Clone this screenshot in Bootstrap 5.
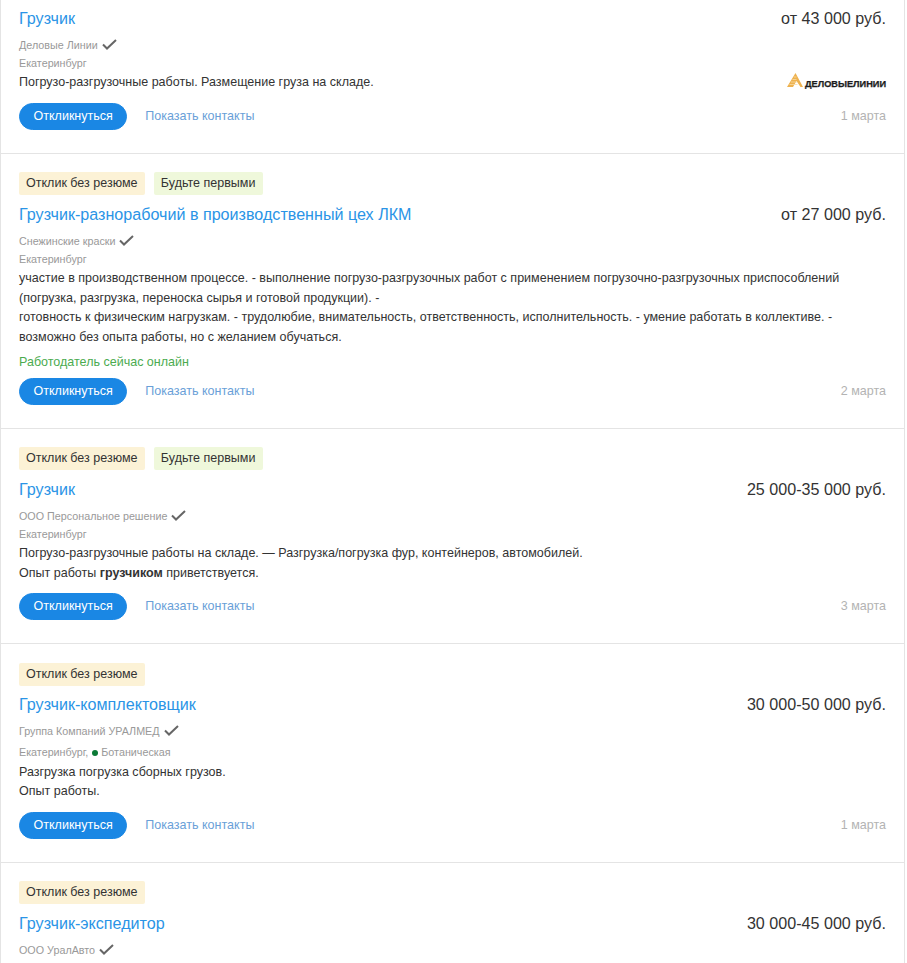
<!DOCTYPE html>
<html lang="ru"><head><meta charset="utf-8">
<link href="https://cdn.jsdelivr.net/npm/bootstrap@5.3.0/dist/css/bootstrap.min.css" rel="stylesheet">
<style>
html,body{background:#fff;overflow:hidden;height:963px}
body{font-family:"Liberation Sans",Arial,sans-serif;font-size:12.53px;line-height:19.5px;color:#333}
.vlist{width:905px;height:964px;overflow:hidden;border-left:1px solid #e4e4e4;border-right:1px solid #e4e4e4;margin-top:-1px}
.vitem{padding:0 18px;border-bottom:1px solid #e4e4e4}
.vlast{border-bottom:0}
.vtags{display:flex;gap:9px;padding-top:18.5px;margin-bottom:7.5px}
.vtag{height:23px;line-height:23px;padding:0 7.4px 0 7px;border-radius:2px;color:#333}
.vtag-y{background:#fcf2d6}
.vtag-g{background:#eff8db}
.vtitle{font-size:16.12px;line-height:22px;color:#2a94e6;text-decoration:none}
.vsalary{font-size:16.12px;line-height:22px;color:#333}
.vfirst{padding-top:7.5px}
.vco{font-size:10.75px;line-height:16px;color:#999;margin-top:8px;height:18px}
.vco svg{margin-left:1px;vertical-align:-1px}
.vcity{font-size:10.75px;line-height:17px;color:#999}
.vcity-metro{margin-top:3px}
.vdesc{margin-top:1.5px}
.vonline{color:#4bab4f;margin-top:6px}
.vbtn{--bs-btn-bg:#1a87e4;--bs-btn-border-color:#1a87e4;--bs-btn-color:#fff;--bs-btn-hover-bg:#1a87e4;--bs-btn-font-size:12.53px;--bs-btn-line-height:17px;padding:4px 13.5px;border-width:1px;height:27px;border-radius:14px;white-space:nowrap}
.vshow{color:#6a9fd8;text-decoration:none;margin-left:18px;line-height:27px}
.vdate{color:#b3b3b3;margin-left:auto;line-height:27px}
.vact{margin-top:10px;padding-bottom:23px}
.vact2{margin-top:5px}
.vmetro{display:inline-block;width:6px;height:6px;border-radius:50%;background:#0b7a36;margin:0 3px 0 1px}
.vlogo{flex:none;margin-top:-4px;margin-right:-1px}
</style></head><body>
<div class="vlist">

<div class="vitem vfirst">
 <div class="d-flex justify-content-between align-items-center"><a class="vtitle" href="#">Грузчик</a><span class="vsalary">от 43 000 руб.</span></div>
 <div class="vco">Деловые Линии <svg width="15" height="11" viewBox="0 0 15 11"><path d="M1 5.5l4 4L14 1" fill="none" stroke="#666" stroke-width="2"/></svg></div>
 <div class="vcity">Екатеринбург</div>
 <div class="d-flex justify-content-between align-items-center vdesc"><div>Погрузо-разгрузочные работы. Размещение груза на складе.</div>
 <svg class="vlogo" width="100" height="16" viewBox="0 0 100 16"><path d="M0 14L8.500 0l7.500 14h-2.500L9.500 8 6 14z" fill="#eeb24f"/><path d="M2.500 11.500h8M4 9h6M5.500 6.500h4M7 4h2.500" stroke="#f8dca6" stroke-width=".8"/><text x="18" y="14" font-family="Liberation Sans" font-weight="700" font-size="8.500" textLength="81" lengthAdjust="spacingAndGlyphs" fill="#1c1c1c" stroke="#1c1c1c" stroke-width=".25">ДЕЛОВЫЕЛИНИИ</text></svg></div>
 <div class="d-flex align-items-start vact"><a class="btn vbtn" href="#">Откликнуться</a><a class="vshow" href="#">Показать контакты</a><span class="vdate">1 марта</span></div>
</div>

<div class="vitem">
 <div class="vtags"><span class="vtag vtag-y">Отклик без резюме</span><span class="vtag vtag-g">Будьте первыми</span></div>
 <div class="d-flex justify-content-between align-items-center"><a class="vtitle" href="#">Грузчик-разнорабочий в производственный цех ЛКМ</a><span class="vsalary">от 27 000 руб.</span></div>
 <div class="vco">Снежинские краски <svg width="15" height="11" viewBox="0 0 15 11"><path d="M1 5.5l4 4L14 1" fill="none" stroke="#666" stroke-width="2"/></svg></div>
 <div class="vcity">Екатеринбург</div>
 <div class="vdesc">участие в производственном процессе. - выполнение погрузо-разгрузочных работ с применением погрузочно-разгрузочных приспособлений<br>(погрузка, разгрузка, переноска сырья и готовой продукции). -<br>готовность к физическим нагрузкам. - трудолюбие, внимательность, ответственность, исполнительность. - умение работать в коллективе. -<br>возможно без опыта работы, но с желанием обучаться.</div>
 <div class="vonline">Работодатель сейчас онлайн</div>
 <div class="d-flex align-items-start vact vact2"><a class="btn vbtn" href="#">Откликнуться</a><a class="vshow" href="#">Показать контакты</a><span class="vdate">2 марта</span></div>
</div>

<div class="vitem">
 <div class="vtags"><span class="vtag vtag-y">Отклик без резюме</span><span class="vtag vtag-g">Будьте первыми</span></div>
 <div class="d-flex justify-content-between align-items-center"><a class="vtitle" href="#">Грузчик</a><span class="vsalary">25 000-35 000 руб.</span></div>
 <div class="vco">ООО Персональное решение <svg width="15" height="11" viewBox="0 0 15 11"><path d="M1 5.5l4 4L14 1" fill="none" stroke="#666" stroke-width="2"/></svg></div>
 <div class="vcity">Екатеринбург</div>
 <div class="vdesc">Погрузо-разгрузочные работы на складе. — Разгрузка/погрузка фур, контейнеров, автомобилей.<br>Опыт работы <b>грузчиком</b> приветствуется.</div>
 <div class="d-flex align-items-start vact"><a class="btn vbtn" href="#">Откликнуться</a><a class="vshow" href="#">Показать контакты</a><span class="vdate">3 марта</span></div>
</div>

<div class="vitem">
 <div class="vtags"><span class="vtag vtag-y">Отклик без резюме</span></div>
 <div class="d-flex justify-content-between align-items-center"><a class="vtitle" href="#">Грузчик-комплектовщик</a><span class="vsalary">30 000-50 000 руб.</span></div>
 <div class="vco">Группа Компаний УРАЛМЕД <svg width="15" height="11" viewBox="0 0 15 11"><path d="M1 5.5l4 4L14 1" fill="none" stroke="#666" stroke-width="2"/></svg></div>
 <div class="vcity vcity-metro">Екатеринбург, <span class="vmetro"></span>Ботаническая</div>
 <div class="vdesc">Разгрузка погрузка сборных грузов.<br>Опыт работы.</div>
 <div class="d-flex align-items-start vact"><a class="btn vbtn" href="#">Откликнуться</a><a class="vshow" href="#">Показать контакты</a><span class="vdate">1 марта</span></div>
</div>

<div class="vitem vlast">
 <div class="vtags"><span class="vtag vtag-y">Отклик без резюме</span></div>
 <div class="d-flex justify-content-between align-items-center"><a class="vtitle" href="#">Грузчик-экспедитор</a><span class="vsalary">30 000-45 000 руб.</span></div>
 <div class="vco">ООО УралАвто <svg width="15" height="11" viewBox="0 0 15 11"><path d="M1 5.5l4 4L14 1" fill="none" stroke="#666" stroke-width="2"/></svg></div>
</div>

</div>
<script src="https://cdn.jsdelivr.net/npm/bootstrap@5.3.0/dist/js/bootstrap.bundle.min.js"></script>
</body></html>
